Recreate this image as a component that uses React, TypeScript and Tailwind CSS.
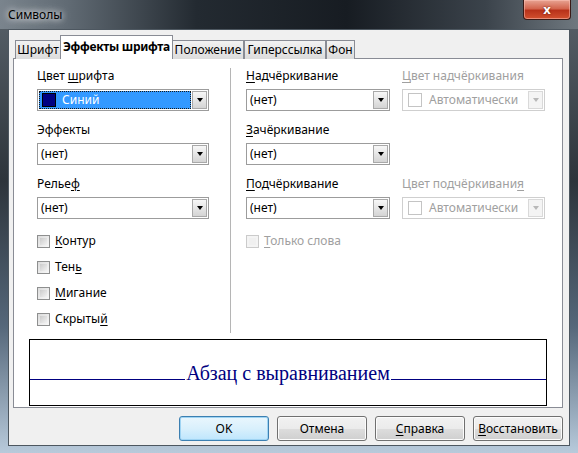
import type { ReactNode } from "react";

const U = ({ children }: { children: ReactNode }) => (
  <span className="underline underline-offset-[2px] decoration-1">{children}</span>
);

const Label = ({ children, disabled, className = "" }: { children: ReactNode; disabled?: boolean; className?: string }) => (
  <div className={`h-[16px] leading-[16px] whitespace-nowrap ${disabled ? "text-[#a0a0a0]" : "text-black"} ${className}`}>{children}</div>
);

const Arrow = ({ disabled }: { disabled?: boolean }) => (
  <div
    className={`w-[15px] h-[18px] flex items-center justify-center border ${
      disabled ? "border-[#d9d9d9] bg-[#f4f4f4]" : "border-[#a9a9a9] bg-gradient-to-b from-[#f7f7f7] via-[#e6e6e6] to-[#d4d4d4]"
    }`}
  >
    <div
      className={`w-0 h-0 border-l-[3.5px] border-r-[3.5px] border-t-[4px] border-l-transparent border-r-transparent ${
        disabled ? "border-t-[#b8b8b8]" : "border-t-black"
      }`}
    />
  </div>
);

const Combo = ({ w, children, disabled }: { w: string; children?: ReactNode; disabled?: boolean }) => (
  <div
    className={`${w} h-[22px] flex items-center bg-white border p-[1px] ${
      disabled ? "border-[#cfcfcf]" : "border-[#9c9c9c]"
    }`}
  >
    <div className="flex-1 h-full flex items-center pl-[2px]">{children ?? "(нет)"}</div>
    <Arrow disabled={disabled} />
  </div>
);

const AutoValue = () => (
  <div className="flex items-center gap-[7px] text-[#a0a0a0]">
    <div className="w-[14px] h-[14px] border border-[#c4c4c4] bg-white ml-[2px]" />
    <span>Автоматически</span>
  </div>
);

const Check = ({ children, disabled }: { children: ReactNode; disabled?: boolean }) => (
  <div className={`h-[16px] flex items-center gap-[5px] ${disabled ? "text-[#a0a0a0]" : "text-black"}`}>
    <div
      className={`w-[13px] h-[13px] border ${
        disabled ? "border-[#cbcbcb] bg-[#f4f4f4]" : "border-[#8e8f8f] bg-gradient-to-br from-[#dcdcdc] to-[#f8f8f8]"
      } p-[2px]`}
    >
      <div className={`w-full h-full ${disabled ? "bg-[#f0f0f0]" : "bg-gradient-to-br from-[#cbcbcb] to-[#f2f2f2]"}`} />
    </div>
    <span className="leading-[16px]">{children}</span>
  </div>
);

const Tab = ({ children, w, active }: { children: ReactNode; w: string; active?: boolean }) => (
  <div
    className={`${w} flex items-center justify-center whitespace-nowrap border border-[#898c95] border-b-0 ${
      active
        ? "h-[24px] bg-white font-bold tracking-[-0.3px] relative z-10 -mx-[1px] pb-[2px]"
        : "h-[19px] bg-gradient-to-b from-[#f2f2f2] to-[#dcdcdc]"
    }`}
  >
    {children}
  </div>
);

const Button = ({ children, primary }: { children: ReactNode; primary?: boolean }) => (
  <div
    className={`w-[90px] h-[25px] flex items-center justify-center whitespace-nowrap rounded-[3px] border ${
      primary
        ? "border-[#3c7fb1] bg-gradient-to-b from-[#eaf6fd] via-[#d9f0fc] to-[#bee6fd] shadow-[inset_0_0_0_1px_#9fd4f3]"
        : "border-[#707070] bg-[linear-gradient(180deg,#f2f2f2_0%,#ebebeb_50%,#dddddd_51%,#cfcfcf_100%)] shadow-[inset_0_0_0_1px_#fcfcfc]"
    }`}
  >
    {children}
  </div>
);

export default function App() {
  return (
    <div
      className="w-[578px] h-[453px] flex flex-col relative overflow-hidden bg-[linear-gradient(180deg,#5a636b_0%,#2d343b_40%,#55677a_72%,#b8cadb_100%)] text-[12px]"
      style={{ fontFamily: '"Noto Sans", "DejaVu Sans", sans-serif' }}
    >
      {/* заголовок окна */}
      <div className="h-[29px] flex items-start pl-[8px] pt-[6px] bg-[linear-gradient(90deg,#7a848d_0%,#606a73_12%,#232a31_34%,#171c22_60%,#3b434b_84%,#6f787f_100%)]">
        <span className="text-black [text-shadow:0_0_6px_#ffffff,0_0_10px_rgba(255,255,255,0.8)]">Символы</span>
      </div>
      <div className="absolute top-0 right-[7px] w-[48px] h-[20px] rounded-b-[4px] border border-t-0 border-[#3a1a16] bg-[linear-gradient(180deg,#e8a493_0%,#d3654e_45%,#b8321a_55%,#d2512f_100%)] shadow-[inset_0_0_0_1px_rgba(255,200,190,0.5)] flex items-center justify-center">
        <span className="text-white font-bold text-[13px] leading-none [text-shadow:0_0_2px_#5a1005]">x</span>
      </div>

      {/* клиентская область */}
      <div className="mx-[8px] w-[562px] h-[417px] border border-[#4d5760] bg-[#f0f0f0] flex flex-col">
        <div className="mt-[5px] ml-[6px] h-[24px] -mb-[1px] flex items-end relative z-10">
          <Tab w="w-[46px]">Шрифт</Tab>
          <Tab w="w-[113px]" active>
            Эффекты шрифта
          </Tab>
          <Tab w="w-[72px]">Положение</Tab>
          <Tab w="w-[82px]">Гиперссылка</Tab>
          <Tab w="w-[29px]">Фон</Tab>
        </div>

        <div className="ml-[4px] w-[550px] h-[350px] bg-white border border-[#898c95] flex flex-col">
          <div className="h-[274px] flex pt-[9px] pl-[23px]">
            <div className="w-[172px] flex flex-col">
              <Label>
                Цвет <U>ш</U>рифта
              </Label>
              <div className="mt-[5px] w-[172px] h-[22px] flex items-center bg-white border border-[#9c9c9c] p-[1px]">
                <div className="flex-1 h-full flex items-center bg-[#3399ff] border border-dotted border-[#1a1a1a] gap-[6px] pl-[2px]">
                  <div className="w-[14px] h-[14px] bg-[#000080] border border-black" />
                  <span className="text-white">Синий</span>
                </div>
                <div className="ml-[1px]">
                  <Arrow />
                </div>
              </div>
              <Label className="mt-[11px]">Эффекты</Label>
              <div className="mt-[5px]">
                <Combo w="w-[172px]" />
              </div>
              <Label className="mt-[11px]">
                Релье<U>ф</U>
              </Label>
              <div className="mt-[5px]">
                <Combo w="w-[172px]" />
              </div>
              <div className="mt-[14px] flex flex-col gap-[10px]">
                <Check>
                  <U>К</U>онтур
                </Check>
                <Check>
                  Тен<U>ь</U>
                </Check>
                <Check>
                  <U>М</U>игание
                </Check>
                <Check>
                  Скрыты<U>й</U>
                </Check>
              </div>
            </div>

            <div className="ml-[21px] w-px self-stretch bg-[#b5b5b5]" />

            <div className="ml-[15px] w-[144px] flex flex-col">
              <Label>
                <U>Н</U>адчёркивание
              </Label>
              <div className="mt-[5px]">
                <Combo w="w-[144px]" />
              </div>
              <Label className="mt-[11px]">
                <U>З</U>ачёркивание
              </Label>
              <div className="mt-[5px]">
                <Combo w="w-[144px]" />
              </div>
              <Label className="mt-[11px]">
                <U>П</U>одчёркивание
              </Label>
              <div className="mt-[5px]">
                <Combo w="w-[144px]" />
              </div>
              <div className="mt-[14px]">
                <Check disabled>
                  <U>Т</U>олько слова
                </Check>
              </div>
            </div>

            <div className="ml-[12px] w-[143px] flex flex-col">
              <Label disabled>
                <U>Ц</U>вет надчёркивания
              </Label>
              <div className="mt-[5px]">
                <Combo w="w-[143px]" disabled>
                  <AutoValue />
                </Combo>
              </div>
              <Label disabled className="mt-[65px]">
                Цвет подчёркивани<U>я</U>
              </Label>
              <div className="mt-[5px]">
                <Combo w="w-[143px]" disabled>
                  <AutoValue />
                </Combo>
              </div>
            </div>
          </div>

          {/* предпросмотр */}
          <div className="mt-[6px] ml-[15px] w-[518px] h-[67px] border border-black bg-white">
            <div className="h-[40px] flex items-end">
              <div className="flex-1 border-b-[1.5px] border-[#000080]" />
              <span
                className="text-[20px] leading-[20px] -mb-[3px] text-[#000080] px-[1px]"
                style={{ fontFamily: '"Liberation Serif", "Times New Roman", serif' }}
              >
                Абзац с выравниванием
              </span>
              <div className="flex-1 border-b-[1.5px] border-[#000080]" />
            </div>
          </div>
        </div>

        <div className="mt-[8px] flex justify-end gap-[8px] pr-[6px]">
          <Button primary>OK</Button>
          <Button>Отмена</Button>
          <Button>
            <U>С</U>правка
          </Button>
          <Button>
            <U>В</U>осстановить
          </Button>
        </div>
      </div>
    </div>
  );
}
